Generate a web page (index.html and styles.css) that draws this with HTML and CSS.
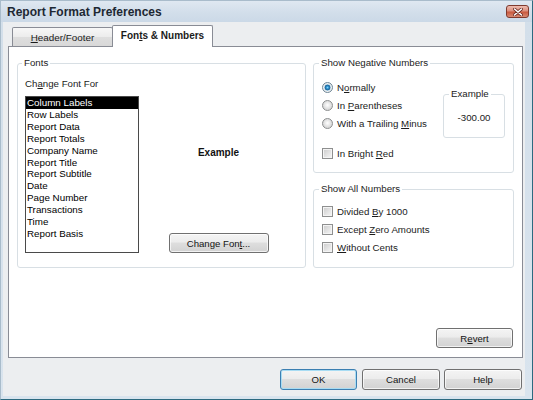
FILE: index.html
```html
<!DOCTYPE html>
<html>
<head>
<meta charset="utf-8">
<link rel="stylesheet" href="styles.css">
</head>
<body>
<div class="window">
  <div class="titlebar">
    <span class="title">Report Format Preferences</span>
    <span class="close">
      <svg width="10" height="8" viewBox="0 0 10 8"><path d="M1.5 1 L8.5 7 M8.5 1 L1.5 7" stroke="#6b2a20" stroke-width="3" stroke-linecap="round"/><path d="M1.5 1 L8.5 7 M8.5 1 L1.5 7" stroke="#fff" stroke-width="1.6" stroke-linecap="round"/></svg>
    </span>
  </div>
  <div class="frame">
    <div class="client">
      <div class="tabs">
        <div class="tab"><span><u>H</u>eader/Footer</span></div>
        <div class="tab active"><span>Fon<u>t</u>s &amp; Numbers</span></div>
      </div>
      <div class="panel">
        <div class="cols">
          <fieldset class="group fonts">
            <legend>Fonts</legend>
            <div class="label">Ch<u>a</u>nge Font For</div>
            <div class="fonts-row">
              <div class="listbox">
                <div class="item selected">Column Labels</div>
                <div class="item">Row Labels</div>
                <div class="item">Report Data</div>
                <div class="item">Report Totals</div>
                <div class="item">Company Name</div>
                <div class="item">Report Title</div>
                <div class="item">Report Subtitle</div>
                <div class="item">Date</div>
                <div class="item">Page Number</div>
                <div class="item">Transactions</div>
                <div class="item">Time</div>
                <div class="item">Report Basis</div>
              </div>
              <div class="fonts-side">
                <div class="example">Example</div>
                <button class="btn change">Change Fon<u>t</u>...</button>
              </div>
            </div>
          </fieldset>
          <div class="right-col">
            <fieldset class="group neg">
              <legend>Show Negative Numbers</legend>
              <div class="neg-top">
                <div class="radios">
                  <div class="opt"><span class="radio on"></span><span>N<u>o</u>rmally</span></div>
                  <div class="opt"><span class="radio"></span><span>In <u>P</u>arentheses</span></div>
                  <div class="opt"><span class="radio"></span><span>With a Trailing <u>M</u>inus</span></div>
                </div>
                <fieldset class="group sample">
                  <legend>Example</legend>
                  <div class="sample-val">-300.00</div>
                </fieldset>
              </div>
              <div class="opt red"><span class="check"></span><span>In Bright <u>R</u>ed</span></div>
            </fieldset>
            <fieldset class="group all">
              <legend>Show All Numbers</legend>
              <div class="checks">
                <div class="opt"><span class="check"></span><span>Divided <u>B</u>y 1000</span></div>
                <div class="opt"><span class="check"></span><span>Except <u>Z</u>ero Amounts</span></div>
                <div class="opt"><span class="check"></span><span><u>W</u>ithout Cents</span></div>
              </div>
            </fieldset>
          </div>
        </div>
        <div class="revert-row">
          <button class="btn revert">R<u>e</u>vert</button>
        </div>
      </div>
      <div class="buttons">
        <button class="btn default">OK</button>
        <button class="btn">Cancel</button>
        <button class="btn">Help</button>
      </div>
    </div>
  </div>
</div>
</body>
</html>
```

FILE: styles.css
```css
* { box-sizing: border-box; }
html, body { margin: 0; padding: 0; }
body {
  width: 533px;
  height: 400px;
  overflow: hidden;
  font-family: "Liberation Sans", Arial, sans-serif;
  font-size: 9.7px;
  color: #1b1b1b;
  background: #dbe5ee;
}
u { text-decoration: underline; text-underline-offset: 1px; }

.window {
  width: 533px;
  height: 400px;
  border: 1px solid;
  border-color: #a9bccb #2d6a80 #2d6a80 #a9bccb;
  background: linear-gradient(#e2eaf2, #d3dfea 22px, #d9e4ee);
  display: flex;
  flex-direction: column;
}
.titlebar {
  height: 21px;
  flex: none;
  display: flex;
  align-items: center;
  justify-content: space-between;
  padding: 0 3px 0 6px;
  background: linear-gradient(#dfe8f1, #d2deea 55%, #cbd9e7);
}
.title {
  font-weight: bold;
  font-size: 12px;
  color: #1d2833;
}
.close {
  width: 23px;
  height: 13px;
  border: 1px solid #7e3a2e;
  border-radius: 3px;
  background: linear-gradient(#edbcb0, #dc8f7d 45%, #c9593f 55%, #d88a73);
  display: flex;
  align-items: center;
  justify-content: center;
}
.frame {
  flex: 1;
  display: flex;
  padding: 0 7px 3px 2px;
}
.client {
  flex: 1;
  display: flex;
  flex-direction: column;
  background: #eceef0;
  padding: 3px 2px 6px 5px;
}

/* tabs */
.tabs {
  height: 22px;
  flex: none;
  display: flex;
  align-items: flex-end;
  margin: 0 0 -1px 4px;
  position: relative;
  z-index: 1;
}
.tab {
  width: 101px;
  height: 19px;
  margin-bottom: 1px;
  border: 1px solid #898c95;
  border-bottom: none;
  border-radius: 2px 2px 0 0;
  background: linear-gradient(#f7f7f7, #ececec 50%, #dedede 52%, #d8d8d8);
  display: flex;
  align-items: center;
  justify-content: center;
  font-size: 9.9px;
  color: #1b1b1b;
}
.tab.active {
  width: 101px;
  height: 22px;
  margin-bottom: 0;
  margin-left: -1px;
  background: #fff;
  font-weight: bold;
  font-size: 10px;
  padding-bottom: 2px;
}

/* panel */
.panel {
  height: 312px;
  flex: none;
  background: #fff;
  border: 1px solid #898c95;
  padding: 10px 8px 9px 8px;
  display: flex;
  flex-direction: column;
}
.cols {
  display: flex;
  gap: 7px;
}
.group {
  margin: 0;
  min-width: 0;
  border: 1px solid #d8dfe4;
  border-radius: 3px;
  padding: 0 8px;
}
.group legend {
  padding: 0 2px;
  margin-left: -3px;
  line-height: 12px;
  color: #222;
}
.fonts {
  flex: 1;
  height: 211px;
  padding: 0 7px;
}
.label {
  margin-top: 9px;
  line-height: 12px;
}
.fonts-row {
  display: flex;
  margin-top: 6px;
}
.listbox {
  width: 114px;
  height: 157px;
  flex: none;
  border: 1px solid #4a4a4a;
  font-size: 9.8px;
  color: #000;
}
.item {
  line-height: 11.9px;
  padding-left: 1px;
  white-space: nowrap;
}
.item.selected {
  background: #000;
  color: #fff;
}
.fonts-side {
  flex: 1;
  display: flex;
  flex-direction: column;
  align-items: center;
  justify-content: space-between;
  padding-top: 51px;
}
.example {
  font-weight: bold;
  font-size: 10px;
  line-height: 12px;
  color: #111;
}

.right-col {
  width: 201px;
  flex: none;
  display: flex;
  flex-direction: column;
  gap: 10px;
}
.neg { height: 116px; }
.all { height: 85px; }
.neg-top {
  display: flex;
  margin-top: 9px;
}
.radios {
  display: flex;
  flex-direction: column;
}
.opt {
  height: 18px;
  display: flex;
  align-items: center;
  gap: 4px;
  white-space: nowrap;
}
.sample {
  margin-left: auto;
  margin-top: 10px;
  width: 62px;
  height: 50px;
  padding: 0 8px;
}
.sample-val {
  margin: 12px -8px 0;
  line-height: 12px;
  text-align: center;
}
.red { margin-top: 6px; }
.checks { margin-top: 7px; }

.radio {
  width: 11px;
  height: 11px;
  flex: none;
  border-radius: 50%;
  border: 1px solid #8c8e8f;
  background: radial-gradient(circle at 50% 45%, #ffffff 0, #eeeeee 2px, #d8d8d8 4.5px, #e9e9e9 5.5px);
}
.radio.on {
  border-color: #6f8797;
  background: radial-gradient(circle at 50% 50%, #7fd0f5 0, #2f93cf 1.3px, #1b5f93 2.6px, #c7e1ef 3.2px, #f1f1f1 4px, #dcdcdc 5.5px);
}
.check {
  width: 11px;
  height: 11px;
  flex: none;
  border: 1px solid #8e8f8f;
  background: linear-gradient(135deg, #cbcbcb, #e6e6e6 60%, #f6f6f6);
  box-shadow: inset 0 0 0 1px #f4f4f4;
}

/* buttons */
.btn {
  font-family: "Liberation Sans", Arial, sans-serif;
  font-size: 9.6px;
  color: #141414;
  height: 21px;
  padding: 0;
  border: 1px solid #707070;
  border-radius: 3px;
  background: linear-gradient(#f4f4f4, #ececec 45%, #dedede 50%, #d2d2d2);
  box-shadow: inset 0 0 0 1px rgba(255,255,255,0.7);
  display: flex;
  align-items: center;
  justify-content: center;
}
.change {
  width: 100px;
  height: 20px;
}
.revert-row {
  margin-top: auto;
  display: flex;
  justify-content: flex-end;
  padding-right: 1px;
}
.revert {
  width: 77px;
  height: 20px;
}
.buttons {
  margin-top: 11px;
  display: flex;
  justify-content: flex-end;
  gap: 4px;
  padding-right: 1px;
}
.buttons .btn { width: 78px; }
.buttons .btn.default {
  width: 77px;
  margin-right: 1px;
  border-color: #3c7fb1;
  box-shadow: inset 0 0 0 1px #a8dcf3;
}
```
